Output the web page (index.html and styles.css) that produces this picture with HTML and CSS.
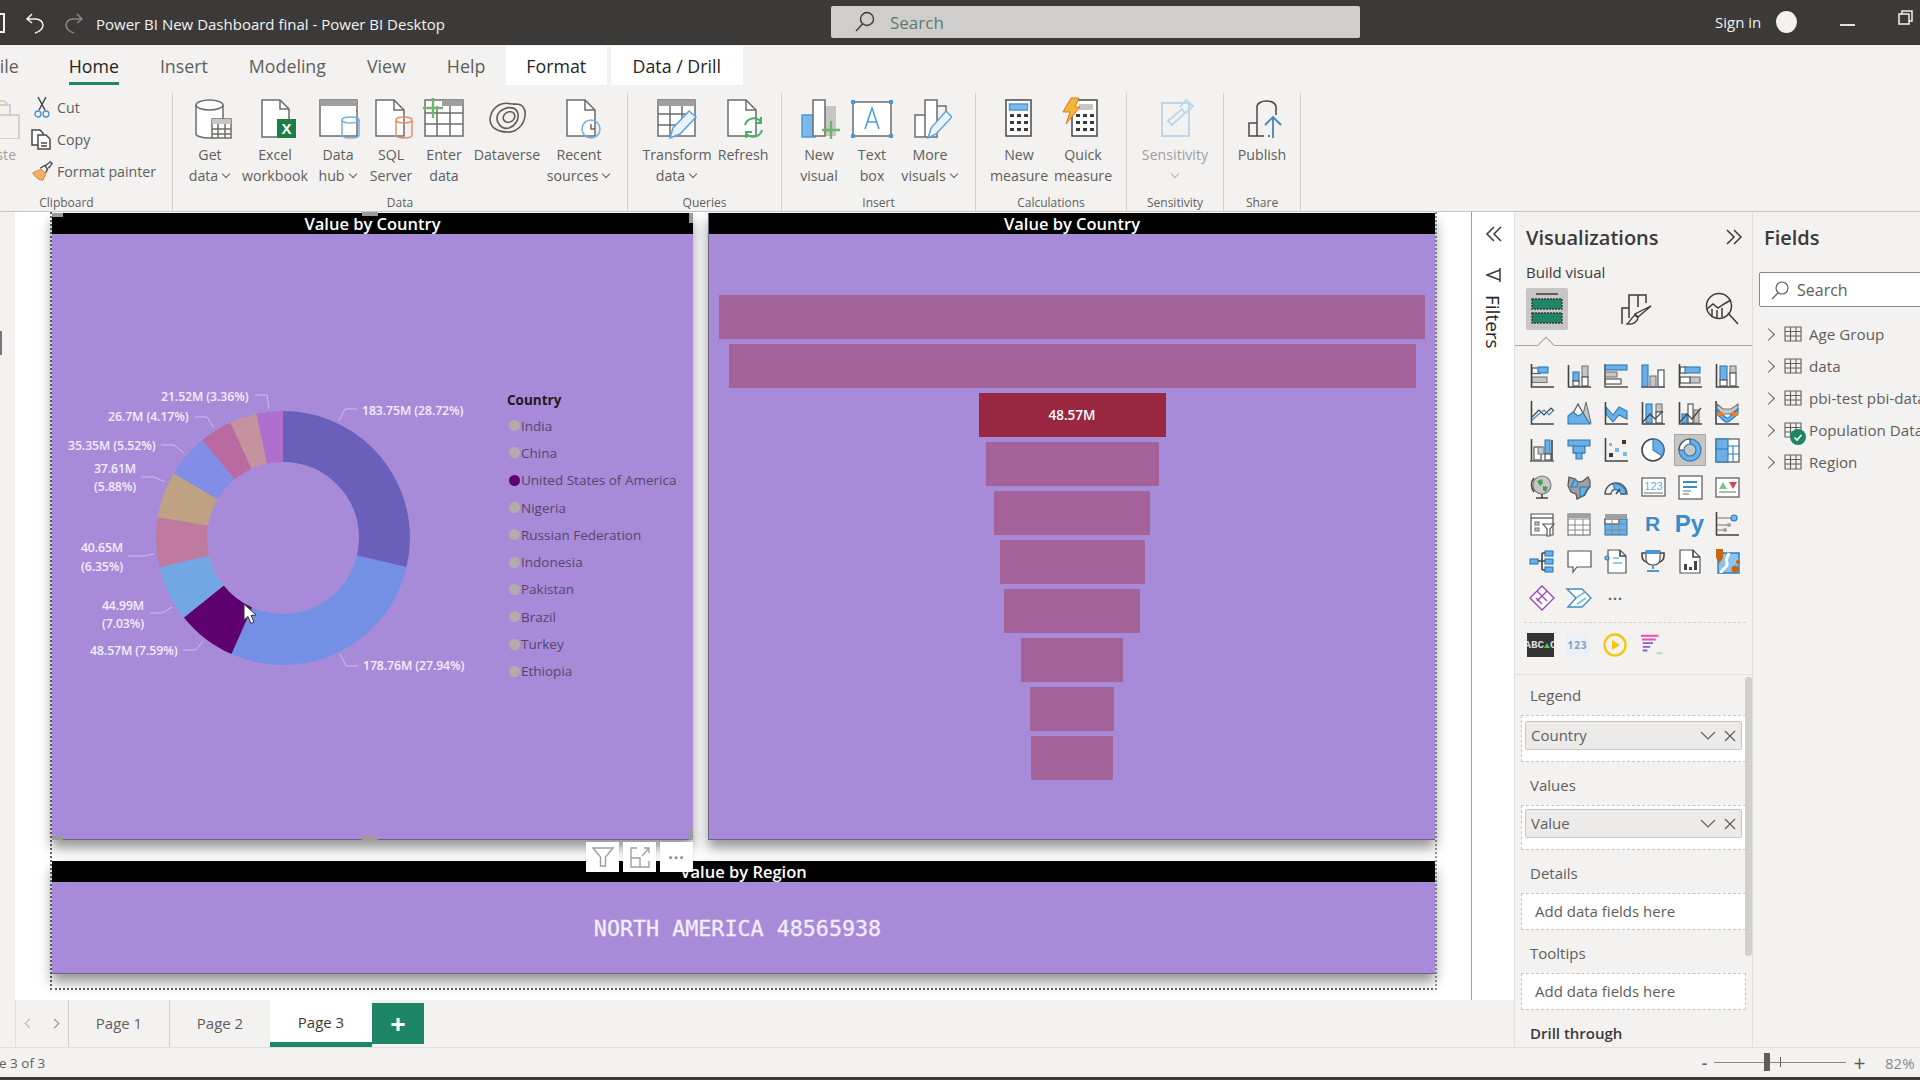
FILE: index.html
```html
<!DOCTYPE html>
<html lang="en">
<head>
<meta charset="utf-8">
<title>Power BI New Dashboard final - Power BI Desktop</title>
<link rel="stylesheet" href="styles.css">
</head>
<body>
<div class="app">

  <header class="titlebar">
    <div class="tb-left">
      <span class="tb-save"></span>
      <svg class="tb-undo" width="20" height="22" viewBox="0 0 20 22"><path class="tb-stroke" d="M7 2 2 7l5 4M2 7h9c4 0 7 3 7 6s-3 7-8 8"/></svg>
      <svg class="tb-redo" width="20" height="22" viewBox="0 0 20 22"><path class="tb-stroke-dim" d="M13 2l5 5-5 4M18 7H9C5 7 2 10 2 13s3 7 8 8"/></svg>
      <span class="tb-title">Power BI New Dashboard final - Power BI Desktop</span>
    </div>
    <div class="tb-search">
      <svg width="22" height="22" viewBox="0 0 22 22"><circle class="dark-line" cx="14" cy="8" r="6.5"/><path class="dark-line" d="M9.5 13 3 20"/></svg>
      <span>Search</span>
    </div>
    <span class="tb-sign">Sign in</span>
    <span class="tb-avatar"></span>
    <span class="tb-min"></span>
    <svg class="tb-restore" width="15" height="15" viewBox="0 0 15 15"><rect class="tb-stroke" x="1" y="4" width="10" height="10"/><path class="tb-stroke" d="M4 4V1h10v10h-3"/></svg>
  </header>

  <section class="ribbon">
    <nav class="tabs">
      <span class="tab tab-file">File</span>
      <span class="tab tab-active">Home</span>
      <span class="tab">Insert</span>
      <span class="tab">Modeling</span>
      <span class="tab">View</span>
      <span class="tab">Help</span>
      <span class="tab tab-ctx tab-format">Format</span>
      <span class="tab tab-ctx tab-drill">Data / Drill</span>
    </nav>
    <div class="tools">

      <div class="group g-clip">
        <div class="group-items">
          <div class="rbtn w-paste rbtn-dim">
            <svg width="44" height="42" viewBox="0 0 44 42"><path class="paste-back" d="M14 8h20v10"/><path class="paste-clip" d="M20 8V4h8l4 4"/><rect class="paste-page" x="10" y="18" width="33" height="24"/></svg>
            <span class="rlabel">Paste</span>
          </div>
          <div class="small-col">
            <div class="small-row">
              <svg width="22" height="22" viewBox="0 0 22 22"><path class="line-d" d="M7 1l7 13M15 1 8 14"/><circle class="line-b" cx="7" cy="18" r="3"/><circle class="line-b" cx="15" cy="18" r="3"/></svg>
              <span>Cut</span>
            </div>
            <div class="small-row">
              <svg width="22" height="22" viewBox="0 0 22 22"><path class="line-d fill-w" d="M1 2h8l3 3v12H1z"/><path class="line-d fill-w" d="M7 7h8l4 4v10H7z"/><path class="line-d" d="M10 15h6M10 18h6"/></svg>
              <span>Copy</span>
            </div>
            <div class="small-row">
              <svg width="22" height="22" viewBox="0 0 24 22"><path class="brush-o" d="M2 13 11 9l5 5-3 7C9 21 4 18 2 13z"/><path class="line-d" d="M10 8l5-3 3 4-2 4"/><path class="line-d" d="M16 5l5-4 2 2-4 5"/></svg>
              <span>Format painter</span>
            </div>
          </div>
        </div>
        <div class="group-name">Clipboard</div>
      </div>

      <div class="group g-data">
        <div class="group-items">
          <div class="rbtn w-get">
            <svg width="44" height="42" viewBox="0 0 44 42"><path class="line-g fill-w" d="M8 8v29c0 2 6 4 13 4s14-2 14-4V8"/><ellipse class="line-g fill-w" cx="21.500" cy="8" rx="13.500" ry="5"/><rect class="line-g fill-w" x="24" y="22" width="19" height="19"/><rect class="fill-g2" x="24" y="22" width="19" height="5"/><path class="line-g" d="M30 27v14M37 27v14M24 32h19M24 37h19"/></svg>
            <span class="rlabel">Get</span><span class="rlabel">data<i class="chev"></i></span>
          </div>
          <div class="rbtn w-excel">
            <svg width="44" height="42" viewBox="0 0 44 42"><path class="line-g fill-w" d="M9 3h18l9 9v28H9z"/><path class="line-g" d="M27 3v9h9"/><rect class="fill-xl" x="24" y="22" width="19" height="19"/><text class="xl-x" x="33.500" y="37">X</text></svg>
            <span class="rlabel">Excel</span><span class="rlabel">workbook</span>
          </div>
          <div class="rbtn w-hub">
            <svg width="44" height="42" viewBox="0 0 44 42"><rect class="line-g fill-w" x="4" y="3" width="37" height="36"/><rect class="fill-g3" x="4" y="3" width="37" height="6"/><path class="line-cb fill-w" d="M26 23v15c0 2 4 3 8.500 3s8.500-1 8.500-3V23"/><ellipse class="line-cb fill-w" cx="34.500" cy="23" rx="8.500" ry="3"/></svg>
            <span class="rlabel">Data</span><span class="rlabel">hub<i class="chev"></i></span>
          </div>
          <div class="rbtn w-sql">
            <svg width="44" height="42" viewBox="0 0 44 42"><path class="line-g fill-w" d="M7 3h18l10 10v26H7z"/><path class="line-g" d="M25 3v10h10"/><path class="line-co fill-w" d="M27 23v15c0 2 3 3 8 3s8-1 8-3V23"/><ellipse class="line-co fill-w" cx="35" cy="23" rx="8" ry="3"/></svg>
            <span class="rlabel">SQL</span><span class="rlabel">Server</span>
          </div>
          <div class="rbtn w-enter">
            <svg width="44" height="42" viewBox="0 0 44 42"><rect class="line-g fill-w" x="3" y="3" width="38" height="36"/><rect class="fill-g3" x="20" y="3" width="21" height="6"/><path class="line-g" d="M15 9v30M28 9v30M3 16h38M3 27h38"/><path class="line-plus" d="M11 1v20M1 11h20"/></svg>
            <span class="rlabel">Enter</span><span class="rlabel">data</span>
          </div>
          <div class="rbtn w-verse">
            <svg width="44" height="42" viewBox="0 0 44 42"><path class="line-v" d="M9 31C2 25 5 13 14 8c7-4 12 0 17-1 6 0 10 4 9 12-1 9-9 17-18 16-5 0-9-1-13-4z"/><path class="line-v" d="M14 27c-4-5-2-12 5-15s13-1 14 5-3 12-9 14c-4 1-8-1-10-4z"/><ellipse class="line-v" cx="24" cy="20" rx="6" ry="5" transform="rotate(-30 24 20)"/></svg>
            <span class="rlabel">Dataverse</span>
          </div>
          <div class="rbtn w-recent">
            <svg width="44" height="42" viewBox="0 0 44 42"><path class="line-g fill-w" d="M10 3h18l10 10v26H10z"/><path class="line-g" d="M28 3v10h10"/><circle class="line-cb fill-w" cx="34" cy="32" r="9"/><path class="line-g" d="M34 27v5h4"/></svg>
            <span class="rlabel">Recent</span><span class="rlabel">sources<i class="chev"></i></span>
          </div>
        </div>
        <div class="group-name">Data</div>
      </div>

      <div class="group g-query">
        <div class="group-items">
          <div class="rbtn w-transform">
            <svg width="44" height="42" viewBox="0 0 44 42"><rect class="line-g fill-w" x="3" y="3" width="37" height="36"/><rect class="fill-g3" x="3" y="3" width="37" height="6"/><path class="line-g" d="M15 9v30M27 9v16M3 17h34M3 28h18"/><path class="pencil" d="M15 41l3-10L34 14l7 6-16 17z"/></svg>
            <span class="rlabel">Transform</span><span class="rlabel">data<i class="chev"></i></span>
          </div>
          <div class="rbtn w-refresh">
            <svg width="44" height="42" viewBox="0 0 44 42"><path class="line-g fill-w" d="M7 3h18l10 10v26H7z"/><path class="line-g" d="M25 3v10h10"/><path class="line-plus2" d="M24 28a9 9 0 0 1 16-3M41 33a9 9 0 0 1-16 3"/><path class="line-plus2" d="M40 20v6h-6M25 41v-6h6"/></svg>
            <span class="rlabel">Refresh</span>
          </div>
        </div>
        <div class="group-name">Queries</div>
      </div>

      <div class="group g-insert">
        <div class="group-items">
          <div class="rbtn w-newv">
            <svg width="44" height="42" viewBox="0 0 44 42"><rect class="fill-g2" x="27" y="9" width="12" height="30"/><rect class="line-b2 fill-bl" x="5" y="18" width="13" height="22"/><rect class="line-g fill-w" x="16" y="3" width="12" height="36"/><path class="line-plus" d="M34 24v18M25 33h18"/></svg>
            <span class="rlabel">New</span><span class="rlabel">visual</span>
          </div>
          <div class="rbtn w-textb">
            <svg width="44" height="42" viewBox="0 0 44 42"><rect class="line-g fill-w" x="3" y="5" width="38" height="34"/><path class="corner" d="M1 3h4v4H1zM39 3h4v4h-4zM1 37h4v4H1zM39 37h4v4h-4z"/><path class="line-b2" d="M15 32 22 11l7 21M17.500 25h9"/></svg>
            <span class="rlabel">Text</span><span class="rlabel">box</span>
          </div>
          <div class="rbtn w-more">
            <svg width="44" height="42" viewBox="0 0 44 42"><path class="line-g fill-w" d="M7 18h10v22H7zM17 3h12v37H17z"/><path class="line-g" d="M29 9h9v8"/><path class="pencil" d="M20 41l3-10L38 14l6 6-16 17z"/></svg>
            <span class="rlabel">More</span><span class="rlabel">visuals<i class="chev"></i></span>
          </div>
        </div>
        <div class="group-name">Insert</div>
      </div>

      <div class="group g-calc">
        <div class="group-items">
          <div class="rbtn w-newm">
            <svg width="44" height="42" viewBox="0 0 44 42"><rect class="line-d fill-w" x="9" y="3" width="25" height="36"/><rect class="line-b2 fill-bl" x="12.500" y="7" width="18" height="6"/><path class="dots" d="M13 17h4v3h-4zM20 17h4v3h-4zM27 17h4v3h-4zM13 24h4v3h-4zM20 24h4v3h-4zM27 24h4v3h-4zM13 31h4v3h-4zM20 31h4v3h-4zM27 31h4v3h-4z"/></svg>
            <span class="rlabel">New</span><span class="rlabel">measure</span>
          </div>
          <div class="rbtn w-quick">
            <svg width="44" height="42" viewBox="0 0 44 42"><rect class="line-d fill-w" x="11" y="3" width="25" height="36"/><rect class="fill-g2" x="18" y="7" width="14" height="6"/><path class="dots" d="M15 17h4v3h-4zM22 17h4v3h-4zM29 17h4v3h-4zM15 24h4v3h-4zM22 24h4v3h-4zM29 24h4v3h-4zM15 31h4v3h-4zM22 31h4v3h-4zM29 31h4v3h-4z"/><path class="bolt" d="M10 1h8l-4 9h5L5 27l4-12H2z"/></svg>
            <span class="rlabel">Quick</span><span class="rlabel">measure</span>
          </div>
        </div>
        <div class="group-name">Calculations</div>
      </div>

      <div class="group g-sens">
        <div class="group-items">
          <div class="rbtn w-sens rbtn-off">
            <svg width="44" height="42" viewBox="0 0 44 42"><rect class="line-pale" x="9" y="6" width="27" height="33"/><path class="line-pale" d="M15 24 29 12l3 4-13 12zM27 10l6-7 7 6-7 7"/></svg>
            <span class="rlabel">Sensitivity</span><span class="rlabel"><i class="chev chev-off"></i></span>
          </div>
        </div>
        <div class="group-name">Sensitivity</div>
      </div>

      <div class="group g-share">
        <div class="group-items">
          <div class="rbtn w-pub">
            <svg width="44" height="42" viewBox="0 0 44 42"><path class="line-d" d="M9 39V26h8v13zM17 39V10c0-8 19-8 19 0v8M24 39h-7M30 39h-2"/><path class="line-b3" d="M33 41V20M25 28l8-8 8 8"/></svg>
            <span class="rlabel">Publish</span>
          </div>
        </div>
        <div class="group-name">Share</div>
      </div>
    </div>
  </section>

  <main class="main">
    <div class="workspace">
      <div class="canvas-row">
        <div class="left-strip"><span class="left-mark"></span></div>
        <div class="page">
          <div class="report">
            <article class="visual visual-selected">
              <h2 class="visual-title">Value by Country</h2>
              <div class="visual-body donut-body">
                <svg class="donut" width="450" height="606" viewBox="52 234 450 606">
                  <g class="slices" transform="rotate(-90 283 538)">
                    <circle class="s1" cx="283" cy="538" r="101.500" pathLength="100" stroke-dasharray="28.72 100" stroke-dashoffset="0"/>
                    <circle class="s2" cx="283" cy="538" r="101.500" pathLength="100" stroke-dasharray="27.94 100" stroke-dashoffset="-28.72"/>
                    <circle class="s3" cx="283" cy="538" r="101.500" pathLength="100" stroke-dasharray="7.59 100" stroke-dashoffset="-56.66"/>
                    <circle class="s4" cx="283" cy="538" r="101.500" pathLength="100" stroke-dasharray="7.03 100" stroke-dashoffset="-64.25"/>
                    <circle class="s5" cx="283" cy="538" r="101.500" pathLength="100" stroke-dasharray="6.35 100" stroke-dashoffset="-71.28"/>
                    <circle class="s6" cx="283" cy="538" r="101.500" pathLength="100" stroke-dasharray="5.88 100" stroke-dashoffset="-77.63"/>
                    <circle class="s7" cx="283" cy="538" r="101.500" pathLength="100" stroke-dasharray="5.52 100" stroke-dashoffset="-83.51"/>
                    <circle class="s8" cx="283" cy="538" r="101.500" pathLength="100" stroke-dasharray="4.17 100" stroke-dashoffset="-89.03"/>
                    <circle class="s9" cx="283" cy="538" r="101.500" pathLength="100" stroke-dasharray="3.44 100" stroke-dashoffset="-93.2"/>
                    <circle class="s10" cx="283" cy="538" r="101.500" pathLength="100" stroke-dasharray="3.36 100" stroke-dashoffset="-96.64"/>
                  </g>
                  <g class="leaders">
                    <polyline points="339,421 345,409 357,409"/>
                    <polyline points="340,654 346,666 358,666"/>
                    <polyline points="203,641 196,650 183,650"/>
                    <polyline points="172,607 162,613 150,613"/>
                    <polyline points="154,554 143,556 128,556"/>
                    <polyline points="165,482 154,477 141,477"/>
                    <polyline points="184,453 174,445 161,445"/>
                    <polyline points="214,428 207,417 195,417"/>
                    <polyline points="269,409 267,395 255,395"/>
                  </g>
                  <g class="labels">
                    <text x="362" y="415">183.75M (28.72%)</text>
                    <text x="363" y="670">178.76M (27.94%)</text>
                    <text x="90" y="655">48.57M (7.59%)</text>
                    <text class="mid" x="123" y="610">44.99M</text>
                    <text class="mid" x="123" y="628">(7.03%)</text>
                    <text class="mid" x="102" y="552">40.65M</text>
                    <text class="mid" x="102" y="571">(6.35%)</text>
                    <text class="mid" x="115" y="473">37.61M</text>
                    <text class="mid" x="115" y="491">(5.88%)</text>
                    <text x="68" y="450">35.35M (5.52%)</text>
                    <text x="108" y="421">26.7M (4.17%)</text>
                    <text x="161" y="401">21.52M (3.36%)</text>
                  </g>
                  <path class="cursor" d="M244 604v16l4-3.500 3 7 3-1.500-3-6.500 5-.5z"/>
                </svg>
                <div class="legend">
                  <div class="legend-title">Country</div>
                  <div class="legend-item"><i class="dot"></i>India</div>
                  <div class="legend-item"><i class="dot"></i>China</div>
                  <div class="legend-item legend-on"><i class="dot"></i>United States of America</div>
                  <div class="legend-item"><i class="dot"></i>Nigeria</div>
                  <div class="legend-item"><i class="dot"></i>Russian Federation</div>
                  <div class="legend-item"><i class="dot"></i>Indonesia</div>
                  <div class="legend-item"><i class="dot"></i>Pakistan</div>
                  <div class="legend-item"><i class="dot"></i>Brazil</div>
                  <div class="legend-item"><i class="dot"></i>Turkey</div>
                  <div class="legend-item"><i class="dot"></i>Ethiopia</div>
                </div>
              </div>
              <span class="handle h-tl"></span><span class="handle h-tc"></span><span class="handle h-tr"></span>
              <span class="handle h-bl"></span><span class="handle h-bc"></span><span class="handle h-br"></span>
              <div class="visual-tools">
                <span class="vt"><svg width="22" height="24" viewBox="0 0 22 24"><path class="line-tool" d="M1 3h20l-7.500 9v9h-5v-9z"/></svg></span>
                <span class="vt"><svg width="22" height="24" viewBox="0 0 22 24"><path class="line-tool" d="M8 3H2v19h18v-6M2 13h9v9M13 11l7-8M15 3h5v5"/></svg></span>
                <span class="vt vt-more">···</span>
              </div>
            </article>

            <article class="visual">
              <h2 class="visual-title">Value by Country</h2>
              <div class="visual-body funnel">
                <div class="bar" style="width:706px"></div>
                <div class="bar" style="width:687px"></div>
                <div class="bar bar-on" style="width:187px">48.57M</div>
                <div class="bar" style="width:173px"></div>
                <div class="bar" style="width:156px"></div>
                <div class="bar" style="width:145px"></div>
                <div class="bar" style="width:136px"></div>
                <div class="bar" style="width:102px"></div>
                <div class="bar" style="width:84px"></div>
                <div class="bar" style="width:82px"></div>
              </div>
            </article>

            <article class="visual visual-wide">
              <h2 class="visual-title">Value by Region</h2>
              <div class="visual-body region-body">NORTH AMERICA 48565938</div>
            </article>
          </div>
        </div>
        <aside class="filters">
          <svg class="fl-chev" width="18" height="18" viewBox="0 0 18 18"><path class="line-dark" d="M9 2 2 9l7 7M16 2 9 9l7 7"/></svg>
          <svg class="fl-funnel" width="16" height="18" viewBox="0 0 16 18"><path class="line-dark" d="M14 4 1 9l13 5M14 2v14"/></svg>
          <span class="fl-text">Filters</span>
        </aside>
      </div>
      <div class="page-tabs">
        <div class="pg-nav"><i class="pg-arrow pg-left"></i><i class="pg-arrow pg-right"></i></div>
        <span class="pg">Page 1</span>
        <span class="pg">Page 2</span>
        <span class="pg pg-active">Page 3</span>
        <span class="pg-add">+</span>
      </div>
    </div>

    <aside class="viz">
      <div class="pane-head viz-head">
        <span class="pane-title">Visualizations</span>
        <svg width="18" height="18" viewBox="0 0 18 18"><path class="line-dark" d="M2 2l7 7-7 7M9 2l7 7-7 7"/></svg>
      </div>
      <div class="build-label">Build visual</div>
      <div class="build-tabs">
        <span class="build-tab build-on">
          <svg width="34" height="34" viewBox="0 0 34 34"><path class="line-k" d="M6 2h22"/><rect class="fill-gr" x="2" y="7" width="30" height="10"/><rect class="fill-gr" x="2" y="21" width="30" height="10"/></svg>
        </span>
        <span class="build-tab build-paint">
          <svg width="32" height="34" viewBox="0 0 32 34"><path class="line-k" d="M2 32V16h7M9 26V3h9v12M18 3h8v8"/><path class="brush" d="M31 14 18 25l-3-3zM15 23l3 3c-1 4-5 7-11 6 3-2 4-6 8-9z"/></svg>
        </span>
        <span class="build-tab build-an">
          <svg width="34" height="34" viewBox="0 0 34 34"><circle class="line-k" cx="14" cy="14" r="12.500"/><path class="line-k" d="M2 17l6-5 5 4 6-4 7-4M7 17v8M12 18v8M17 16v9M23 21l10 11"/></svg>
        </span>
      </div>
      <div class="viz-grid">
        <span class="vi"><svg viewBox="0 0 24 24"><rect class="w" x="2" y="4" width="8" height="5.500"/><rect class="b" x="8" y="3" width="10" height="6"/><rect class="g" x="2" y="13" width="15" height="5.500"/><path class="a" d="M1.500 0V23H24"/></svg></span>
        <span class="vi"><svg viewBox="0 0 24 24"><rect class="b" x="6" y="8" width="6" height="9"/><rect class="w" x="6" y="17" width="6" height="5"/><rect class="g" x="15" y="2" width="6" height="11"/><rect class="w" x="15" y="13" width="6" height="9"/><path class="a" d="M1.500 1V23H24"/></svg></span>
        <span class="vi"><svg viewBox="0 0 24 24"><rect class="b" x="1" y="1" width="22" height="5"/><rect class="g" x="1" y="8" width="12" height="5"/><rect class="w" x="1" y="15" width="16" height="5"/><path class="a2" d="M1 0V23H24"/></svg></span>
        <span class="vi"><svg viewBox="0 0 24 24"><rect class="b" x="1" y="1" width="6" height="22"/><rect class="g" x="9" y="12" width="6" height="11"/><rect class="w" x="17" y="6" width="6" height="17"/><path class="a2" d="M0 23H24"/></svg></span>
        <span class="vi"><svg viewBox="0 0 24 24"><rect class="w" x="2" y="3" width="6" height="6"/><rect class="b" x="7" y="3" width="15" height="6"/><rect class="g" x="12" y="13" width="10" height="6"/><rect class="w" x="2" y="13" width="10" height="6"/><path class="a" d="M1.500 0V23H24"/></svg></span>
        <span class="vi"><svg viewBox="0 0 24 24"><rect class="b" x="5" y="2" width="7" height="14"/><rect class="w" x="5" y="16" width="7" height="6"/><rect class="g" x="15" y="2" width="6" height="7"/><rect class="w" x="15" y="9" width="6" height="13"/><path class="a" d="M1.500 0V23H24"/></svg></span>

        <span class="vi"><svg viewBox="0 0 24 24"><path class="a" d="M1.500 0V23H24"/><path class="ln" d="M2 16l7-7 5 5 7-7 3 3"/><path class="lb" d="M2 19l7-6 5-4 5 5 5-5"/></svg></span>
        <span class="vi"><svg viewBox="0 0 24 24"><path class="g" d="M14 22 19 1l5 21z"/><path class="w" d="M4 16 11 3l7 13z"/><path class="b" d="M1 23V15l5-4 5 4 5-3 7 11z"/></svg></span>
        <span class="vi"><svg viewBox="0 0 24 24"><path class="b" d="M2 6l7 8 6-8 8 4v8l-8-4-6 7-7-8z"/><path class="a" d="M1.500 1V23H24"/></svg></span>
        <span class="vi"><svg viewBox="0 0 24 24"><rect class="b" x="5" y="3" width="6" height="19"/><rect class="g" x="15" y="3" width="6" height="8"/><rect class="w" x="15" y="11" width="6" height="11"/><path class="a" d="M1.500 1V23H24"/><path class="ln" d="M2 21l7-8 5 5 8-8"/></svg></span>
        <span class="vi"><svg viewBox="0 0 24 24"><rect class="b" x="4" y="13" width="5" height="9"/><rect class="w" x="10" y="3" width="5" height="19"/><rect class="g" x="16" y="9" width="5" height="13"/><path class="a" d="M1.500 1V23H24"/><path class="ln" d="M2 21l7-8 5 5 9-11"/></svg></span>
        <span class="vi"><svg viewBox="0 0 24 24"><path class="a" d="M1 0V23H24"/><path class="g" d="M2 3l6 5h8l7-5v5l-7 5H8L2 9z"/><path class="b" d="M2 8l6 6c4 4 5 4 8 0l7-6v5l-7 6c-4 3-5 3-8 0l-6-6z"/><rect class="o" x="2" y="11" width="6" height="4"/><rect class="o" x="17" y="11" width="6" height="4"/></svg></span>

        <span class="vi"><svg viewBox="0 0 24 24"><rect class="w" x="4" y="9" width="7" height="13"/><rect class="g" x="8" y="9" width="6" height="7"/><rect class="b" x="15" y="2" width="5" height="14"/><rect class="w" x="15" y="16" width="6" height="6"/><path class="a" d="M1.500 1V23M22 2v21"/><path class="a2" d="M0 23H24"/></svg></span>
        <span class="vi"><svg viewBox="0 0 24 24"><path class="b" d="M1 2h22v6h-5v7h-3v6H9v-6H6V8H1z"/><path class="bl" d="M6 8h12M6 15h12"/></svg></span>
        <span class="vi"><svg viewBox="0 0 24 24"><path class="a" d="M1.500 0V23H24"/><rect class="dk" x="5" y="15" width="4" height="4"/><rect class="lbx" x="5" y="5" width="3" height="3"/><rect class="lbx" x="11" y="10" width="4" height="4"/><rect class="dk" x="18" y="2" width="4" height="4"/><rect class="lbx" x="19" y="14" width="4" height="4"/></svg></span>
        <span class="vi"><svg viewBox="0 0 24 24"><circle class="w2" cx="12" cy="12" r="11"/><path class="b" d="M12 1a11 11 0 0 1 9 17l-9-6z"/></svg></span>
        <span class="vi vi-on"><svg viewBox="0 0 24 24"><circle class="b" cx="12" cy="12" r="11"/><path class="w" d="M12 12V1A11 11 0 0 0 1 12z"/><circle class="ring" cx="12" cy="12" r="6"/></svg></span>
        <span class="vi"><svg viewBox="0 0 24 24"><rect class="w" x="1" y="1" width="23" height="23"/><rect class="b" x="1" y="1" width="12" height="23"/><path class="bl" d="M1 11h12M13 8h11M13 16h11M18 8v16"/></svg></span>

        <span class="vi"><svg viewBox="0 0 24 24"><circle class="g" cx="12" cy="10" r="9"/><path class="gn" d="M7 6l5-2 1 4-3 3zM13 11l5 1-2 5-3-2z"/><path class="a" d="M6 23h12M12 19v4M4 3a11 11 0 0 0 0 14"/></svg></span>
        <span class="vi"><svg viewBox="0 0 24 24"><path class="mp" d="M2 2l6 2 3 3 5-1 5-4 2 4v6l-2 2-3 6-8 4-1-5-5-2-3-6z"/><path class="b" d="M13 12h9l-2 2-3 6-4 2z"/><path class="b" d="M8 4l3 3-1 5H4z"/></svg></span>
        <span class="vi"><svg viewBox="0 0 24 24"><path class="a2" d="M1 19a11 11 0 0 1 22 0H17a5 5 0 0 0-10 0z"/><path class="b" d="M9 9a11 11 0 0 1 13 9l-5 1a5 5 0 0 0-6-4z"/><path class="a" d="M12 19l4-5"/></svg></span>
        <span class="vi"><svg viewBox="0 0 24 24"><rect class="w" x="1" y="3" width="23" height="18"/><text class="ic-num" x="12.500" y="15">123</text><path class="lg" d="M3 18h19"/></svg></span>
        <span class="vi"><svg viewBox="0 0 24 24"><rect class="w" x="1" y="1" width="23" height="23"/><path class="lbs" d="M5 7h14M5 12h14"/><path class="lg" d="M5 16h8M5 19h6"/></svg></span>
        <span class="vi"><svg viewBox="0 0 24 24"><rect class="w" x="1" y="3" width="23" height="19"/><path class="tri-g" d="M4 14l4-7 4 7z"/><path class="tri-r" d="M14 7h8l-4 7z"/><path class="lg" d="M4 17h17"/></svg></span>

        <span class="vi"><svg viewBox="0 0 24 24"><path class="w" d="M1 2h22v21H1z"/><path class="a2" d="M1 6h22"/><rect class="g" x="5" y="10" width="4" height="3"/><rect class="g" x="5" y="16" width="4" height="3"/><path class="w" d="M13 12h11l-4 5v7h-3v-7z"/></svg></span>
        <span class="vi"><svg viewBox="0 0 24 24"><rect class="w3" x="1" y="2" width="22" height="21"/><path class="gl" d="M1 7h22M1 13h22M1 18h22M8 7v16M16 7v16"/><rect class="g3" x="1" y="2" width="22" height="4"/></svg></span>
        <span class="vi"><svg viewBox="0 0 24 24"><rect class="b" x="1" y="7" width="22" height="16"/><rect class="w" x="1" y="7" width="14" height="5"/><rect class="g3" x="1" y="2" width="22" height="5"/><path class="gl" d="M8 7v16M15 7v16M1 12h22M1 18h22"/></svg></span>
        <span class="vi"><span class="vi-txt vi-r">R</span></span>
        <span class="vi"><span class="vi-txt vi-py">Py</span></span>
        <span class="vi"><svg viewBox="0 0 24 24"><path class="a" d="M1.500 0V23H24"/><path class="lg" d="M2 6h14M2 13h11M2 18h8"/><circle class="lbc" cx="19" cy="6" r="3"/><circle class="gdot" cx="14" cy="13" r="2"/><circle class="gdot" cx="10" cy="18" r="2"/></svg></span>

        <span class="vi"><svg viewBox="0 0 24 24"><rect class="b" x="0" y="10" width="8" height="5"/><rect class="b" x="15" y="2" width="8" height="5"/><rect class="b" x="15" y="10" width="8" height="5"/><rect class="b" x="15" y="18" width="8" height="5"/><path class="a" d="M8 12h4M12 4v17M12 4h3M12 12h3M12 21h3"/></svg></span>
        <span class="vi"><svg viewBox="0 0 24 24"><path class="w" d="M1 2h23v16H10l-4 5v-5H1z"/></svg></span>
        <span class="vi"><svg viewBox="0 0 24 24"><path class="w" d="M4 1h12l6 6v17H4z"/><path class="a" d="M16 1v6h6"/><circle class="lbc" cx="3" cy="9" r="2"/><path class="lb" d="M9 9h6M9 14h9"/></svg></span>
        <span class="vi"><svg viewBox="0 0 24 24"><path class="a" d="M5 4H1v3c0 4 3 6 5 6M19 4h4v3c0 4-3 6-5 6"/><path class="w" d="M5 2h14v8c0 4-3 6-7 6s-7-2-7-6z"/><rect class="bs" x="5" y="1" width="14" height="4"/><path class="bs" d="M11 16h2v4h-2zM6 21h12v2H6z"/></svg></span>
        <span class="vi"><svg viewBox="0 0 24 24"><path class="w" d="M2 1h13l7 7v16H2z"/><path class="a" d="M15 1v7h7"/><path class="bars-d" d="M6 15h3v6H6zM11 18h3v3h-3zM16 12h3v9h-3z"/></svg></span>
        <span class="vi"><svg viewBox="0 0 24 24"><path class="map-f" d="M3 4h21v20H3z"/><path class="map-r" d="M14 4c-2 6-4 6-2 10s-6 6-6 10"/><path class="o2" d="M1 0h7v9l-3.500 5L1 9z"/><circle class="o2" cx="20" cy="20" r="3.500"/><circle class="o2" cx="23" cy="13" r="2"/></svg></span>

        <span class="vi"><svg viewBox="0 0 24 24"><path class="pa" d="M12 0 24 12 12 24 0 12z"/><path class="pa" d="M7 5l10 10M17 5 7 15M6 12l6 6"/></svg></span>
        <span class="vi"><svg viewBox="0 0 24 24"><path class="pb" d="M0 3h15l9 9-9 9H1l8-9z"/><path class="pb2" d="M9 12l9-6M10 18l9-6"/></svg></span>
        <span class="vi vi-more">···</span>
      </div>
      <div class="vi-sep"></div>
      <div class="viz-grid viz-custom">
        <span class="vi"><span class="abc">ABC<b></b>C</span></span>
        <span class="vi"><span class="num123">123</span></span>
        <span class="vi"><svg viewBox="0 0 24 24"><circle class="yl" cx="12" cy="12" r="10.500"/><path class="yl2" d="M9 7v10l8-5z"/></svg></span>
        <span class="vi"><svg viewBox="0 0 26 24"><path class="pk" d="M1 2h19M2 6h15"/><path class="pu" d="M3 10h11M3 14h8M3 18h5"/><path class="tl" d="M18 21h6"/></svg></span>
      </div>

      <div class="wells">
        <div class="field">
          <div class="field-label">Legend</div>
          <div class="well well-legend"><div class="chip"><span>Country</span><svg class="chip-v" width="16" height="10" viewBox="0 0 16 10"><path class="line-mid" d="M1 1l7 7 7-7"/></svg><svg width="12" height="12" viewBox="0 0 12 12"><path class="line-mid" d="M1 1l10 10M11 1 1 11"/></svg></div></div>
        </div>
        <div class="field">
          <div class="field-label">Values</div>
          <div class="well well-values"><div class="chip"><span>Value</span><svg class="chip-v" width="16" height="10" viewBox="0 0 16 10"><path class="line-mid" d="M1 1l7 7 7-7"/></svg><svg width="12" height="12" viewBox="0 0 12 12"><path class="line-mid" d="M1 1l10 10M11 1 1 11"/></svg></div></div>
        </div>
        <div class="field">
          <div class="field-label">Details</div>
          <div class="well well-empty">Add data fields here</div>
        </div>
        <div class="field">
          <div class="field-label">Tooltips</div>
          <div class="well well-empty">Add data fields here</div>
        </div>
        <div class="field">
          <div class="field-label field-strong">Drill through</div>
        </div>
        <span class="scrollbar"></span>
      </div>
    </aside>

    <aside class="fields">
      <div class="pane-head fields-head"><span class="pane-title">Fields</span></div>
      <div class="fields-search">
        <svg width="20" height="20" viewBox="0 0 20 20"><circle class="line-mid" cx="12" cy="8" r="6"/><path class="line-mid" d="M8 13l-6 6"/></svg>
        <span>Search</span>
      </div>
      <div class="tree">
        <div class="tree-row"><i class="tree-chev"></i><svg class="tbl" width="18" height="16" viewBox="0 0 18 16"><path class="tbl-line" d="M1 1h16v14H1zM1 5.500h16M1 10h16M6.500 1v14M12 1v14"/></svg><span>Age Group</span></div>
        <div class="tree-row"><i class="tree-chev"></i><svg class="tbl" width="18" height="16" viewBox="0 0 18 16"><path class="tbl-line" d="M1 1h16v14H1zM1 5.500h16M1 10h16M6.500 1v14M12 1v14"/></svg><span>data</span></div>
        <div class="tree-row"><i class="tree-chev"></i><svg class="tbl" width="18" height="16" viewBox="0 0 18 16"><path class="tbl-line" d="M1 1h16v14H1zM1 5.500h16M1 10h16M6.500 1v14M12 1v14"/></svg><span>pbi-test pbi-data</span></div>
        <div class="tree-row"><i class="tree-chev"></i><svg class="tbl" width="18" height="16" viewBox="0 0 18 16"><path class="tbl-line" d="M1 1h16v14H1zM1 5.500h16M1 10h16M6.500 1v14M12 1v14"/></svg><svg class="tree-badge" width="16" height="16" viewBox="0 0 16 16"><circle class="badge-c" cx="8" cy="8" r="8"/><path class="badge-k" d="M4.500 8.500 7 11l4.500-5"/></svg><span>Population Data</span></div>
        <div class="tree-row"><i class="tree-chev"></i><svg class="tbl" width="18" height="16" viewBox="0 0 18 16"><path class="tbl-line" d="M1 1h16v14H1zM1 5.500h16M1 10h16M6.500 1v14M12 1v14"/></svg><span>Region</span></div>
      </div>
    </aside>
  </main>

  <footer class="status">
    <span class="status-page">Page 3 of 3</span>
    <div class="zoom">
      <span class="zoom-sign">-</span>
      <span class="zoom-track"><i class="zoom-thumb"></i><i class="zoom-tick"></i></span>
      <span class="zoom-sign zoom-plus">+</span>
      <span class="zoom-val">82%</span>
    </div>
  </footer>
  <div class="footer-strip"></div>
</div>
</body>
</html>
```

FILE: styles.css
```css
* { box-sizing: border-box; }
html, body { margin: 0; padding: 0; }
body {
  width: 1920px; height: 1080px; overflow: hidden;
  font-family: "Open Sans", "Noto Sans", sans-serif;
  background: #f3f2f1; color: #605e5c;
}
h2 { margin: 0; }
i { font-style: normal; }
svg { display: block; flex: none; }
.app { display: flex; flex-direction: column; height: 1080px; width: 1920px; overflow: hidden; }

/* title bar */
.titlebar { height: 45px; flex: none; background: #3b3a39; display: flex; align-items: center; color: #f3f2f1; position: relative; z-index: 3; }
.tb-left { width: 831px; display: flex; align-items: center; height: 100%; }
.tb-save { width: 5px; height: 20px; border: 2px solid #f3f2f1; border-left: 0; }
.tb-undo { margin-left: 20px; }
.tb-redo { margin-left: 19px; }
.tb-title { margin: 3px 0 0 12px; font-size: 15px; white-space: nowrap; }
.tb-stroke { fill: none; stroke: #f3f2f1; stroke-width: 1.500; }
.tb-stroke-dim { fill: none; stroke: #8a8886; stroke-width: 1.500; }
.tb-search { width: 529px; height: 32px; background: #cfcecc; border-radius: 2px; display: flex; align-items: center; padding-left: 22px; gap: 15px; font-size: 17px; color: #5f7a70; margin-top: -1px; }
.dark-line { fill: none; stroke: #3b3a39; stroke-width: 1.400; }
.tb-sign { margin: -2px 0 0 355px; font-size: 15px; width: 61px; }
.tb-avatar { width: 21px; height: 22px; border-radius: 50%; background: #f3f2f1; margin-top: -1px; }
.tb-min { margin-left: 43px; width: 15px; height: 2px; background: #e1dfdd; margin-top: 5px; }
.tb-restore { margin-left: 43px; margin-top: -10px; }

/* ribbon */
.ribbon { height: 167px; flex: none; background: #f3f2f1; border-bottom: 1px solid #c8c6c4; position: relative; z-index: 2; }
.tabs { height: 40px; display: flex; padding-top: 1px; }
.tab { display: flex; align-items: center; justify-content: center; font-size: 17.800px; height: 39px; color: #605e5c; padding: 0 20.500px; position: relative; white-space: nowrap; }
.tab-file { margin-left: -30px; margin-right: 9px; }
.tab-active { color: #252423; }
.tab-active::after { content: ""; position: absolute; left: 20.500px; right: 20.500px; bottom: 0; height: 3px; background: #1e8567; }
.tab-ctx { background: #fff; color: #252423; padding: 0; }
.tab-format { width: 101px; }
.tab-drill { width: 132px; margin-left: 4px; }
.tools { display: flex; height: 126px; padding-top: 8px; }
.group { height: 118px; border-right: 1px solid #d2d0ce; display: flex; flex-direction: column; flex: none; }
.group-items { display: flex; padding-top: 4px; flex: 1; }
.group-name { text-align: center; font-size: 12px; line-height: 16px; color: #605e5c; }
.g-clip { width: 212px; margin-left: -39px; }
.g-data { width: 455px; }
.g-data .group-items { padding-left: 7px; }
.g-query { width: 154px; }
.g-query .group-items { padding-left: 6px; }
.g-insert { width: 194px; }
.g-insert .group-items { padding-left: 12px; }
.g-calc { width: 151px; }
.g-calc .group-items { padding-left: 5px; }
.g-sens { width: 97px; }
.g-share { width: 77px; }
.rbtn { display: flex; flex-direction: column; align-items: center; flex: none; }
.rbtn svg { margin-bottom: 5px; }
.rlabel { font-size: 14.200px; line-height: 21px; height: 21px; white-space: nowrap; color: #605e5c; display: flex; align-items: center; }
.chev { display: inline-block; width: 6px; height: 6px; border-right: 1.500px solid #605e5c; border-bottom: 1.500px solid #605e5c; transform: rotate(45deg); margin: -3px 2px 0 5px; }
.chev-off { border-color: #b5b3b1; margin: -3px 0 0; }
.rbtn-off .rlabel { color: #a19f9d; }
.rbtn-dim .rlabel { color: #a19f9d; }
.w-paste { width: 74px; }
.w-get { width: 60px; } .w-excel { width: 70px; } .w-hub { width: 56px; } .w-sql { width: 50px; } .w-enter { width: 56px; } .w-verse { width: 70px; } .w-recent { width: 74px; }
.w-transform { width: 86px; } .w-refresh { width: 46px; }
.w-newv { width: 50px; } .w-textb { width: 56px; } .w-more { width: 60px; }
.w-newm { width: 76px; } .w-quick { width: 52px; }
.w-sens { width: 96px; } .w-pub { width: 76px; }
.small-col { display: flex; flex-direction: column; gap: 12px; margin-left: -4px; }
.small-row { display: flex; align-items: center; height: 20px; font-size: 14.200px; white-space: nowrap; }
.small-row svg { margin-right: 4px; }

/* ribbon icon paints */
.line-g { fill: none; stroke: #6e6c6a; stroke-width: 1.500; }
.line-d { fill: none; stroke: #4a4846; stroke-width: 1.500; }
.line-v { fill: none; stroke: #5f5d5b; stroke-width: 1.600; }
.fill-w { fill: #fff; }
.fill-g2 { fill: #c8c6c4; }
.fill-g3 { fill: #a19f9d; }
.fill-xl { fill: #1e7e45; }
.xl-x { fill: #fff; font: 700 15px "Liberation Sans", sans-serif; text-anchor: middle; }
.line-cb { fill: none; stroke: #7aaedb; stroke-width: 1.500; }
.line-co { fill: none; stroke: #e0906a; stroke-width: 1.500; }
.line-plus { fill: none; stroke: #6cb56a; stroke-width: 2.400; }
.line-plus2 { fill: none; stroke: #4caf6a; stroke-width: 2; }
.line-b { fill: none; stroke: #4a8fc9; stroke-width: 1.300; }
.line-b2 { fill: none; stroke: #4a9ad9; stroke-width: 1.500; }
.line-b3 { fill: none; stroke: #3f87bb; stroke-width: 1.800; }
.fill-bl { fill: #7db8e8; }
.pencil { fill: #eaf3fb; stroke: #5ba3e0; stroke-width: 1.500; }
.corner { fill: #4a9ad9; }
.dots { fill: #3b3a39; }
.bolt { fill: #f4b43a; stroke: #d87a22; stroke-width: 1; }
.line-pale { fill: none; stroke: #b8d5ea; stroke-width: 1.800; }
.brush-o { fill: #f0b070; stroke: #d87a22; stroke-width: 1; }
.paste-back { fill: none; stroke: #c8c6c4; stroke-width: 1.500; }
.paste-clip { fill: none; stroke: #e2c69a; stroke-width: 1.500; }
.paste-page { fill: #f3f2f1; stroke: #c8c6c4; stroke-width: 1.500; }

/* main */
.main { height: 835px; flex: none; display: flex; }
.workspace { width: 1514px; flex: none; display: flex; flex-direction: column; }
.canvas-row { height: 788px; display: flex; flex: none; }
.left-strip { width: 15px; flex: none; background: #f3f2f1; padding-top: 119px; }
.left-mark { display: block; width: 2px; height: 24px; background: #77777a; }
.page { width: 1457px; flex: none; background: #fff; border-right: 1px solid #a19f9d; padding-left: 35px; overflow: hidden; }
.report { width: 1387px; height: 778px; border: 2px dotted #666; border-top: 0; border-right-color: #999; padding-top: 1px; display: grid; grid-template-columns: 641px 727px; column-gap: 15px; grid-template-rows: 627px 113px; row-gap: 21px; }
.visual { position: relative; display: flex; flex-direction: column; background: #a88bd8; box-shadow: 0 8px 12px rgba(0,0,0,.42); border-left: 1px solid #6d6480; border-bottom: 1px solid #6d5f88; }
.visual-selected { z-index: 2; border-left: 0; }
.visual-wide { grid-column: 1 / 3; border-left: 0; }
.visual-title { height: 21px; flex: none; background: #000; color: #fff; font-size: 16.500px; line-height: 21px; font-weight: 600; text-align: center; }
.visual-body { flex: 1; position: relative; }
.donut-body { display: flex; }
.donut { width: 450px; height: 606px; }
.slices circle { fill: none; stroke-width: 51px; }
.s1 { stroke: #6a5fbb; } .s2 { stroke: #7490e4; } .s3 { stroke: #5f0070; } .s4 { stroke: #72a6e4; } .s5 { stroke: #c07a9f; }
.s6 { stroke: #bfa184; } .s7 { stroke: #818de6; } .s8 { stroke: #b96aa0; } .s9 { stroke: #c7929f; } .s10 { stroke: #ae6fce; }
.leaders polyline { fill: none; stroke: #cdbfe8; stroke-width: 1; }
.labels text { fill: #f3eefb; font-size: 12.300px; font-weight: 600; letter-spacing: -.1px; }
.labels .mid { text-anchor: middle; }
.cursor { fill: #fff; stroke: #333; stroke-width: 1; }
.legend { padding: 156px 0 0 5px; }
.legend-title { font-size: 13.500px; font-weight: 700; color: #1d1a25; height: 22px; line-height: 20px; }
.legend-item { display: flex; align-items: center; height: 27.300px; font-size: 13.500px; color: #50486a; white-space: nowrap; margin-left: 2px; }
.dot { width: 11px; height: 11px; border-radius: 50%; background: #b3aca9; margin-right: 1px; }
.legend-on .dot { background: #5f0070; }
.handle { position: absolute; background: #9d9b99; }
.h-tl { left: 0; top: 0; width: 11px; height: 4px; }
.h-tc { left: 310px; top: -1px; width: 16px; height: 4px; }
.h-tr { right: 0; top: 0; width: 4px; height: 10px; }
.h-bl { left: 0; bottom: -1px; width: 11px; height: 4px; }
.h-bc { left: 310px; bottom: -1px; width: 16px; height: 4px; }
.h-br { right: 0; bottom: -1px; width: 4px; height: 10px; }
.visual-tools { position: absolute; top: 629px; right: 0; display: flex; gap: 4px; z-index: 3; }
.vt { width: 33px; height: 30px; background: #fff; display: flex; align-items: center; justify-content: center; box-shadow: 0 1px 1px rgba(0,0,0,.2); }
.vt-more { color: #8a8886; font-size: 16px; font-weight: 700; letter-spacing: 1px; }
.line-tool { fill: none; stroke: #a19f9d; stroke-width: 1.400; }

.funnel { display: flex; flex-direction: column; align-items: center; gap: 5px; padding-top: 61px; }
.bar { height: 44px; background: #a46398; flex: none; display: flex; align-items: center; justify-content: center; color: #fff; font-size: 13.500px; font-weight: 600; }
.bar-on { background: #99273f; }
.region-body { display: flex; align-items: center; justify-content: center; padding: 2px 12px 0 0; font-family: "DejaVu Sans Mono", "Liberation Mono", monospace; font-size: 21.700px; color: #f3eefb; -webkit-text-stroke: .3px #f3eefb; }

/* filters */
.filters { width: 42px; flex: none; background: #fff; display: flex; flex-direction: column; align-items: center; padding-top: 13px; color: #252423; }
.line-dark { fill: none; stroke: #3b3a39; stroke-width: 1.500; }
.fl-chev { margin-left: 2px; }
.fl-funnel { margin-top: 23px; margin-left: 1px; }
.fl-text { writing-mode: vertical-rl; font-size: 19px; margin-top: 11px; line-height: 20px; margin-left: -1px; }

/* page tabs */
.page-tabs { height: 47px; flex: none; background: #f3f2f1; display: flex; border-left: 15px solid #f3f2f1; }
.pg-nav { width: 53px; display: flex; align-items: center; padding-left: 10px; gap: 18px; border-left: 1px solid #e1dfdd; }
.pg-arrow { width: 7px; height: 7px; border-top: 1.500px solid #b5b3b1; border-left: 1.500px solid #b5b3b1; }
.pg-left { transform: rotate(-45deg); }
.pg-right { transform: rotate(135deg); border-color: #8a8886; }
.pg { width: 101px; border-left: 1px solid #d2d0ce; display: flex; align-items: center; justify-content: center; font-size: 15px; color: #605e5c; padding-bottom: 1px; }
.pg-active { background: #fff; border-left: 0; border-bottom: 5px solid #1e8567; padding: 2px 0 0; width: 102px; color: #3b3a39; }
.pg-add { width: 52px; height: 41px; margin: 3px 0 0; background: #1e8567; color: #fff; font-size: 27px; font-weight: 700; display: flex; align-items: center; justify-content: center; line-height: 1; }

/* visualizations pane */
.viz { width: 239px; flex: none; border-left: 1px solid #e1dfdd; border-right: 1px solid #e1dfdd; background: #f3f2f1; display: flex; flex-direction: column; position: relative; overflow: hidden; }
.pane-head { height: 24px; margin-top: 13px; display: flex; align-items: center; justify-content: space-between; flex: none; }
.viz-head { padding: 0 9px 0 11px; }
.pane-title { font-size: 20px; font-weight: 600; color: #3b3a39; }
.build-label { margin: 13px 0 0 11px; font-size: 15px; line-height: 20px; font-weight: 500; color: #3b3a39; flex: none; }
.build-tabs { margin-top: 6px; height: 58px; display: flex; border-bottom: 1px solid #a8a6a4; position: relative; flex: none; padding-left: 11px; }
.build-tabs::after { content: ""; position: absolute; left: 25px; bottom: -6px; width: 11px; height: 11px; background: #f3f2f1; border-top: 1px solid #a8a6a4; border-left: 1px solid #a8a6a4; transform: rotate(45deg); }
.build-tab { height: 42px; display: flex; align-items: center; justify-content: center; }
.build-on { width: 42px; background: #c8c6c4; border-radius: 2px; }
.build-paint { width: 32px; margin-left: 52px; }
.build-an { width: 34px; margin-left: 53px; }
.line-k { fill: none; stroke: #3b3a39; stroke-width: 1.500; }
.fill-gr { fill: #1e8567; stroke: #3b3a39; stroke-width: 1.400; stroke-dasharray: 2 1; }
.brush { fill: #f3f2f1; stroke: #3b3a39; stroke-width: 1.300; }
.viz-grid { display: grid; grid-template-columns: repeat(6, 37px); grid-auto-rows: 37px; padding: 11.500px 0 0 8px; flex: none; align-items: center; justify-items: center; }
.vi { width: 32px; height: 32px; display: flex; align-items: center; justify-content: center; border: 1px solid transparent; }
.vi svg { width: 24px; height: 24px; overflow: visible; }
.vi-on { background: #c8c6c4; border-color: #a8a6a4; }
.vi-more { color: #605e5c; font-size: 14px; font-weight: 700; letter-spacing: 1px; }
.vi-sep { flex: none; height: 0; width: 222px; margin: 5.500px 0 0 9px; border-top: 1px dashed #d2d0ce; }
.viz-custom { padding: 3.500px 0 0 7px; }
.a { fill: none; stroke: #444; stroke-width: 1.600; }
.a2 { fill: none; stroke: #555; stroke-width: 1.300; }
.b { fill: #6caee6; stroke: #2b7cb8; stroke-width: 1.100; }
.g { fill: #c8c6c4; stroke: #777; stroke-width: 1.100; }
.w { fill: #fff; stroke: #555; stroke-width: 1.200; }
.w2 { fill: #fff; stroke: #444; stroke-width: 1.600; }
.w3 { fill: #fff; stroke: #777; stroke-width: 1.200; }
.g3 { fill: #a19f9d; }
.gl { fill: none; stroke: #888; stroke-width: 1; }
.ln { fill: none; stroke: #444; stroke-width: 1.200; }
.lb { fill: none; stroke: #3a8cc9; stroke-width: 1.200; }
.lbs { fill: none; stroke: #3a8cc9; stroke-width: 2; }
.lg { fill: none; stroke: #a19f9d; stroke-width: 1.500; }
.bl { fill: none; stroke: #2b7cb8; stroke-width: 1.100; }
.o { fill: #e0823c; }
.o2 { fill: #ca6410; }
.dk { fill: #3b3a39; }
.lbx { fill: #7db8e8; }
.lbc { fill: #7db8e8; stroke: #2b7cb8; stroke-width: 1.200; }
.gdot { fill: #a19f9d; }
.ring { fill: #c8c6c4; stroke: #2b7cb8; stroke-width: 1.100; }
.gn { fill: #3fa34d; }
.mp { fill: #a19f9d; stroke: #555; stroke-width: 1.200; }
.ic-num { font: 11px "Liberation Sans", sans-serif; fill: #6caee6; text-anchor: middle; }
.tri-g { fill: #7cc48a; }
.tri-r { fill: #d8434f; }
.bs { fill: #4a98d6; }
.bars-d { fill: #444; }
.map-f { fill: #8cc3ee; stroke: #2b7cb8; stroke-width: 1.400; }
.map-r { fill: none; stroke: #fff; stroke-width: 3; }
.pa { fill: #fff; stroke: #9c3fb5; stroke-width: 1.300; }
.pb { fill: #fff; stroke: #3a8cc9; stroke-width: 1.400; }
.pb2 { fill: none; stroke: #7db8e8; stroke-width: 1.600; }
.vi-txt { font-family: "Liberation Sans", sans-serif; font-weight: 700; color: #3a8cc9; }
.vi-r { font-size: 21px; }
.vi-py { font-size: 24px; }
.abc { background: #333; color: #ddd; width: 27px; height: 24px; overflow: hidden; flex: none; display: flex; align-items: center; justify-content: center; font: 700 11px/24px "Liberation Mono", monospace; white-space: nowrap; }
.abc b { display: inline-block; flex: none; width: 0; height: 0; border-left: 3px solid transparent; border-right: 3px solid transparent; border-bottom: 5px solid #3fd04d; }
.num123 { background: #ebeff6; color: #7c9dc8; font-size: 10px; font-weight: 700; letter-spacing: 1px; width: 24px; height: 24px; display: flex; align-items: center; justify-content: center; }
.yl { fill: none; stroke: #f2c811; stroke-width: 2.400; }
.yl2 { fill: #f2c811; }
.pk { fill: none; stroke: #e54fb6; stroke-width: 2; }
.pu { fill: none; stroke: #8a5fd8; stroke-width: 2; }
.tl { fill: none; stroke: #a8d8cc; stroke-width: 2; }

.wells { flex: 1; position: relative; margin-top: 10.500px; padding: 12px 7px 0 6px; border-top: 1px solid #e1dfdd; }
.field { margin-bottom: 15px; }
.field-label { height: 20px; line-height: 17px; padding-left: 9px; margin-bottom: 8px; font-size: 15px; color: #605e5c; }
.field-strong { font-weight: 600; color: #3b3a39; }
.well { background: #fff; border: 1px dashed #c8c6c4; width: 225px; font-size: 15px; color: #605e5c; }
.well-legend { height: 47px; padding: 5px 3px; }
.well-values { height: 45px; padding: 3px 3px; }
.well-empty { height: 37px; line-height: 34px; padding-left: 13px; }
.chip { height: 29px; background: #edebe9; border: 1px solid #c8c6c4; border-radius: 2px; display: flex; align-items: center; padding: 0 5px; }
.chip span { flex: 1; margin-top: -2px; }
.chip-v { margin-right: 8px; }
.line-mid { fill: none; stroke: #605e5c; stroke-width: 1.200; }
.scrollbar { position: absolute; right: 0; top: 2px; width: 7px; height: 279px; background: #d2d0ce; border-radius: 3px; }

/* fields pane */
.fields { flex: 1; background: #f3f2f1; overflow: hidden; }
.fields-head { padding-left: 11px; }
.fields-search { margin: 23px -30px 0 6px; height: 35px; border: 1px solid #8a8886; border-radius: 2px; background: #fff; display: flex; align-items: center; padding-left: 10px; gap: 7px; font-size: 16px; color: #605e5c; }
.tree { margin-top: 11px; }
.tree-row { height: 32px; display: flex; align-items: center; font-size: 15.200px; color: #605e5c; white-space: nowrap; padding-left: 12px; position: relative; }
.tree-chev { flex: none; width: 9px; height: 9px; border-top: 1.300px solid #605e5c; border-right: 1.300px solid #605e5c; transform: rotate(45deg); margin-right: 11px; margin-left: -1px; }
.tbl { margin-right: 7px; }
.tbl-line { fill: none; stroke: #605e5c; stroke-width: 1.100; }
.tree-badge { position: absolute; left: 37px; top: 15px; }
.badge-c { fill: #1e8567; }
.badge-k { fill: none; stroke: #fff; stroke-width: 1.600; }

/* status */
.status { height: 30px; flex: none; background: #f3f2f1; border-top: 1px solid #e1dfdd; display: flex; align-items: center; }
.status-page { margin-left: -24px; font-size: 13.500px; color: #605e5c; }
.zoom { margin-left: auto; display: flex; align-items: center; width: 223px; }
.zoom-sign { width: 15px; font-size: 17px; font-weight: 600; text-align: center; color: #605e5c; }
.zoom-track { width: 132px; height: 1px; background: #8a8886; position: relative; margin-left: 2px; }
.zoom-thumb { position: absolute; left: 50px; top: -9px; width: 6px; height: 18px; background: #605e5c; }
.zoom-tick { position: absolute; left: 66px; top: -5px; width: 1px; height: 10px; background: #605e5c; }
.zoom-plus { font-size: 21px; margin-left: 6px; font-weight: 500; }
.zoom-val { margin-left: 18px; font-size: 15px; color: #8a8886; }
.footer-strip { flex: 1; background: #3b3a39; }
```
